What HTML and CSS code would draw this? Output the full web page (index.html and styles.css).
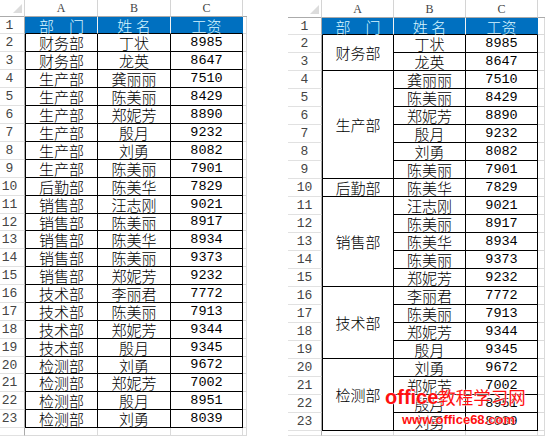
FILE: index.html
```html
<!DOCTYPE html>
<html lang="zh">
<head>
<meta charset="utf-8">
<title>Sheets</title>
<link rel="stylesheet" href="styles.css">
</head>
<body>
<div class="page">
  <div class="sheet left">
    <div class="corner"><span class="tri"></span></div><div class="ch">A</div><div class="ch">B</div><div class="ch">C</div><div class="ch x"></div>
    <div class="rh">1</div><div class="c a blue">部　门</div><div class="c blue">姓 名</div><div class="c blue last">工资</div><div class="g"></div>
    <div class="rh">2</div><div class="c a">财务部</div><div class="c">丁状</div><div class="c n">8985</div><div class="g"></div>
    <div class="rh">3</div><div class="c a">财务部</div><div class="c">龙英</div><div class="c n">8647</div><div class="g"></div>
    <div class="rh">4</div><div class="c a">生产部</div><div class="c">龚丽丽</div><div class="c n">7510</div><div class="g"></div>
    <div class="rh">5</div><div class="c a">生产部</div><div class="c">陈美丽</div><div class="c n">8429</div><div class="g"></div>
    <div class="rh">6</div><div class="c a">生产部</div><div class="c">郑妮芳</div><div class="c n">8890</div><div class="g"></div>
    <div class="rh">7</div><div class="c a">生产部</div><div class="c">殷月</div><div class="c n">9232</div><div class="g"></div>
    <div class="rh">8</div><div class="c a">生产部</div><div class="c">刘勇</div><div class="c n">8082</div><div class="g"></div>
    <div class="rh">9</div><div class="c a">生产部</div><div class="c">陈美丽</div><div class="c n">7901</div><div class="g"></div>
    <div class="rh">10</div><div class="c a">后勤部</div><div class="c">陈美华</div><div class="c n">7829</div><div class="g"></div>
    <div class="rh">11</div><div class="c a">销售部</div><div class="c">汪志刚</div><div class="c n">9021</div><div class="g"></div>
    <div class="rh">12</div><div class="c a">销售部</div><div class="c">陈美丽</div><div class="c n">8917</div><div class="g"></div>
    <div class="rh">13</div><div class="c a">销售部</div><div class="c">陈美华</div><div class="c n">8934</div><div class="g"></div>
    <div class="rh">14</div><div class="c a">销售部</div><div class="c">陈美丽</div><div class="c n">9373</div><div class="g"></div>
    <div class="rh">15</div><div class="c a">销售部</div><div class="c">郑妮芳</div><div class="c n">9232</div><div class="g"></div>
    <div class="rh">16</div><div class="c a">技术部</div><div class="c">李丽君</div><div class="c n">7772</div><div class="g"></div>
    <div class="rh">17</div><div class="c a">技术部</div><div class="c">陈美丽</div><div class="c n">7913</div><div class="g"></div>
    <div class="rh">18</div><div class="c a">技术部</div><div class="c">郑妮芳</div><div class="c n">9344</div><div class="g"></div>
    <div class="rh">19</div><div class="c a">技术部</div><div class="c">殷月</div><div class="c n">9345</div><div class="g"></div>
    <div class="rh">20</div><div class="c a">检测部</div><div class="c">刘勇</div><div class="c n">9672</div><div class="g"></div>
    <div class="rh">21</div><div class="c a">检测部</div><div class="c">郑妮芳</div><div class="c n">7002</div><div class="g"></div>
    <div class="rh">22</div><div class="c a">检测部</div><div class="c">殷月</div><div class="c n">8951</div><div class="g"></div>
    <div class="rh">23</div><div class="c a">检测部</div><div class="c">刘勇</div><div class="c n">8039</div><div class="g"></div>
    <div class="rh"></div><div class="g"></div><div class="g"></div><div class="g"></div><div class="g"></div>
  </div>

  <div class="sheet right">
    <div class="corner"><span class="tri"></span></div><div class="ch">A</div><div class="ch">B</div><div class="ch">C</div><div class="ch x"></div>
    <div class="rh">1</div><div class="c a blue">部　门</div><div class="c blue">姓 名</div><div class="c blue last">工资</div><div class="g"></div>
    <div class="rh">2</div><div class="c a span2">财务部</div><div class="c">丁状</div><div class="c n">8985</div><div class="g"></div>
    <div class="rh">3</div><div class="c">龙英</div><div class="c n">8647</div><div class="g"></div>
    <div class="rh">4</div><div class="c a span6">生产部</div><div class="c">龚丽丽</div><div class="c n">7510</div><div class="g"></div>
    <div class="rh">5</div><div class="c">陈美丽</div><div class="c n">8429</div><div class="g"></div>
    <div class="rh">6</div><div class="c">郑妮芳</div><div class="c n">8890</div><div class="g"></div>
    <div class="rh">7</div><div class="c">殷月</div><div class="c n">9232</div><div class="g"></div>
    <div class="rh">8</div><div class="c">刘勇</div><div class="c n">8082</div><div class="g"></div>
    <div class="rh">9</div><div class="c">陈美丽</div><div class="c n">7901</div><div class="g"></div>
    <div class="rh">10</div><div class="c a">后勤部</div><div class="c">陈美华</div><div class="c n">7829</div><div class="g"></div>
    <div class="rh">11</div><div class="c a span5">销售部</div><div class="c">汪志刚</div><div class="c n">9021</div><div class="g"></div>
    <div class="rh">12</div><div class="c">陈美丽</div><div class="c n">8917</div><div class="g"></div>
    <div class="rh">13</div><div class="c">陈美华</div><div class="c n">8934</div><div class="g"></div>
    <div class="rh">14</div><div class="c">陈美丽</div><div class="c n">9373</div><div class="g"></div>
    <div class="rh">15</div><div class="c">郑妮芳</div><div class="c n">9232</div><div class="g"></div>
    <div class="rh">16</div><div class="c a span4">技术部</div><div class="c">李丽君</div><div class="c n">7772</div><div class="g"></div>
    <div class="rh">17</div><div class="c">陈美丽</div><div class="c n">7913</div><div class="g"></div>
    <div class="rh">18</div><div class="c">郑妮芳</div><div class="c n">9344</div><div class="g"></div>
    <div class="rh">19</div><div class="c">殷月</div><div class="c n">9345</div><div class="g"></div>
    <div class="rh">20</div><div class="c a span4">检测部</div><div class="c">刘勇</div><div class="c n">9672</div><div class="g"></div>
    <div class="rh">21</div><div class="c">郑妮芳</div><div class="c n">7002</div><div class="g"></div>
    <div class="rh">22</div><div class="c">殷月</div><div class="c n">8951</div><div class="g"></div>
    <div class="rh">23</div><div class="c">刘勇</div><div class="c n">8039</div><div class="g"></div>
    <div class="rh"></div><div class="g"></div><div class="g"></div><div class="g"></div><div class="g"></div>
  </div>
</div>
<div class="wm wm1"><span class="lat">office</span>教程学习网</div>
<div class="wm wm2">www.office68.com</div>
</body>
</html>
```

FILE: styles.css
```css
html, body {
  margin: 0;
  padding: 0;
  background: #fff;
}
body {
  width: 545px;
  height: 436px;
  overflow: hidden;
  position: relative;
  font-family: "Noto Sans CJK SC", "Noto Sans", sans-serif;
}
.page {
  display: flex;
  gap: 41px;
  height: 436px;
}
.sheet {
  display: grid;
  height: 436px;
}
.left {
  width: 247px;
  grid-template-columns: 25px 73px 73px 72px 4px;
  grid-template-rows: 17px 17px repeat(10, 18px) 17px repeat(7, 18px) 17px repeat(3, 18px) 1fr;
}
.right {
  width: 257px;
  grid-template-columns: 34px 72px 72px 72px 7px;
  grid-template-rows: 18px 17px repeat(22, 18px) 1fr;
}
.sheet > div {
  box-sizing: border-box;
  min-width: 0;
  min-height: 0;
}
.corner {
  display: flex;
  justify-content: flex-end;
  align-items: flex-end;
  padding: 0 2px 3px 0;
  border-right: 1px solid #d4d4d4;
  border-bottom: 1px solid #ababab;
}
.tri {
  width: 0;
  height: 0;
  border-left: 9px solid transparent;
  border-bottom: 9px solid #dcdcdc;
}
.ch {
  display: flex;
  align-items: center;
  justify-content: center;
  font-family: "Liberation Serif", serif;
  font-size: 12px;
  line-height: 12px;
  color: #444;
  border-right: 1px solid #d4d4d4;
  border-bottom: 1px solid #ababab;
}
.ch.x {
  border-right: none;
}
.rh {
  display: flex;
  align-items: center;
  justify-content: center;
  font-family: "Liberation Mono", monospace;
  font-size: 13px;
  line-height: 13px;
  color: #444;
  border-right: 1px solid #ababab;
  border-bottom: 1px solid #e1e1e1;
}
.left .rh {
  padding-right: 5px;
}
.g {
  border-right: 1px solid #dadada;
  border-bottom: 1px solid #dadada;
}
.c {
  display: flex;
  align-items: center;
  justify-content: center;
  font-size: 15px;
  font-weight: 300;
  line-height: 15px;
  color: #000;
  border-right: 1px solid #000;
  border-bottom: 1px solid #000;
  white-space: nowrap;
}
.c.a {
  border-left: 1px solid #000;
}
.c.n {
  font-family: "Liberation Mono", monospace;
  font-size: 13.5px;
  line-height: 14px;
  font-weight: 400;
}
.c.blue {
  background: #0070c0;
  color: #d8f6ff;
  border-right-color: #f2f2f2;
  border-left-color: #0070c0;
}
.c.blue.last {
  border-right-color: #0070c0;
}
.span2 { grid-row: span 2; }
.span4 { grid-row: span 4; }
.span5 { grid-row: span 5; }
.span6 { grid-row: span 6; }

.wm {
  position: absolute;
  color: #ff1010;
  font-weight: 700;
  white-space: nowrap;
  text-shadow: 0 0 2px #fff, 0 0 1px #fff;
}
.wm1 {
  left: 385px;
  top: 387px;
  font-size: 17.5px;
  line-height: 20px;
  font-weight: 400;
}
.wm1 .lat {
  font-family: "Liberation Sans", sans-serif;
  font-size: 20px;
  font-weight: 700;
}
.wm2 {
  left: 402px;
  top: 413px;
  font-family: "Liberation Sans", sans-serif;
  font-size: 13px;
  line-height: 13px;
}
```
